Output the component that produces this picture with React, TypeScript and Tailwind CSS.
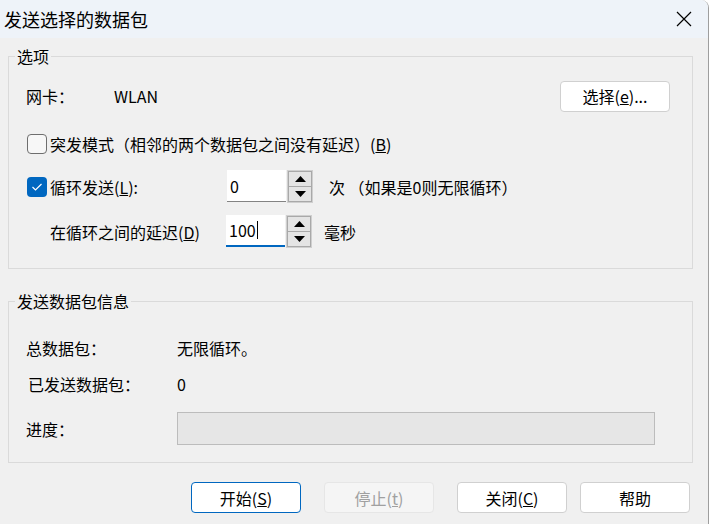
import type { ReactNode } from "react";

function Checkbox({ checked }: { checked?: boolean }) {
  if (checked) {
    return (
      <span className="flex h-[20px] w-[20px] shrink-0 items-center justify-center rounded-[4px] bg-[#0067c0]">
        <svg width="12" height="10" viewBox="0 0 12 10" aria-hidden>
          <polyline
            points="1.5,5 4.5,8 10.5,2"
            fill="none"
            stroke="#fff"
            strokeWidth="1.2"
          />
        </svg>
      </span>
    );
  }
  return (
    <span className="h-[20px] w-[20px] shrink-0 rounded-[4px] border border-[#6e6e6e] bg-[#f7f7f7]" />
  );
}

function Spin({ value, focused }: { value: string; focused?: boolean }) {
  return (
    <div className="flex items-stretch">
      <div
        className={
          focused
            ? "flex h-[32px] w-[59px] items-center border-b-2 border-[#0067c0] bg-white pl-[3px]"
            : "flex h-[32px] w-[59px] items-center border-b border-[#838383] bg-white pl-[3px]"
        }
      >
        <span className="leading-[20px]">{value}</span>
        {focused ? <span className="ml-[1px] h-[18px] w-px bg-black" /> : null}
      </div>
      <div className="ml-px flex h-[33px] w-[26px] flex-col border border-[#cfcfcf]">
        <div className="flex flex-1 items-center justify-center border border-[#a9a9a9] bg-[#e4e4e4]">
          <svg width="11" height="6" viewBox="0 0 11 6" aria-hidden>
            <polygon points="5.5,0 11,6 0,6" fill="#000" />
          </svg>
        </div>
        <div className="flex flex-1 items-center justify-center border border-t-0 border-[#a9a9a9] bg-[#e4e4e4]">
          <svg width="11" height="6" viewBox="0 0 11 6" aria-hidden>
            <polygon points="0,0 11,0 5.5,6" fill="#000" />
          </svg>
        </div>
      </div>
    </div>
  );
}

function Btn({
  children,
  primary,
  disabled,
  className = "",
}: {
  children: ReactNode;
  primary?: boolean;
  disabled?: boolean;
  className?: string;
}) {
  const tone = disabled
    ? "border-[#e6e6e6] bg-[#f5f5f5] text-[#a0a0a0]"
    : primary
      ? "border-[#0067c0] bg-white text-black"
      : "border-[#d0d0d0] bg-white text-black";
  return (
    <button
      type="button"
      className={`flex h-[31px] w-[110px] items-center justify-center rounded-[4px] border text-[16px] leading-[20px] ${tone} ${className}`}
    >
      {children}
    </button>
  );
}

export default function App() {
  return (
    <div className="h-[524px] w-[714px] overflow-hidden bg-white font-['Noto_Sans_CJK_SC',sans-serif] text-[16px] leading-[20px] text-black">
      <div className="flex h-full w-[709px] flex-col overflow-hidden rounded-tr-[8px] border-r border-[#9e9e9e]">
        <div className="flex h-[38px] shrink-0 items-center justify-between bg-[#eef3f9] pl-[4px] pr-[16px]">
          <span className="text-[18px] leading-[24px]">发送选择的数据包</span>
          <svg width="16" height="16" viewBox="0 0 16 16" aria-hidden>
            <path d="M1 1L15 15M15 1L1 15" stroke="#000" strokeWidth="1.2" />
          </svg>
        </div>

        <div className="flex-1 bg-[#f0f0f0]">
          <fieldset className="ml-[8px] mt-[8px] w-[685px] border border-[#dadada]">
            <legend className="ml-[6px] px-[2px] leading-[20px]">选项</legend>
            <div className="flex flex-col pb-[20px] pl-[17px] pr-[22px] pt-[15px]">
              <div className="flex h-[30px] items-center">
                <span className="w-[88px]">网卡：</span>
                <span>WLAN</span>
                <Btn className="ml-auto">
                  选择(<u>e</u>)...
                </Btn>
              </div>

              <div className="mt-[23px] flex h-[20px] items-center pl-px">
                <Checkbox />
                <span className="ml-[3px]">
                  突发模式（相邻的两个数据包之间没有延迟）(<u>B</u>)
                </span>
              </div>

              <div className="mt-[16px] flex h-[33px] items-center">
                <div className="flex w-[201px] items-center pl-px">
                  <Checkbox checked />
                  <span className="ml-[3px]">
                    循环发送(<u>L</u>):
                  </span>
                </div>
                <Spin value="0" />
                <span className="ml-[16px]">次 （如果是0则无限循环）</span>
              </div>

              <div className="mt-[12px] flex h-[33px] items-center">
                <div className="w-[200px] pl-[24px]">
                  在循环之间的延迟(<u>D</u>)
                </div>
                <Spin value="100" focused />
                <span className="ml-[12px]">毫秒</span>
              </div>
            </div>
          </fieldset>

          <fieldset className="ml-[8px] mt-[22px] w-[685px] border border-[#dadada]">
            <legend className="ml-[6px] px-[2px] leading-[20px]">发送数据包信息</legend>
            <div className="flex flex-col pb-[17px] pl-[17px] pt-[25px]">
              <div className="flex h-[24px] items-center">
                <span className="w-[151px]">总数据包：</span>
                <span>无限循环。</span>
              </div>
              <div className="mt-[12px] flex h-[24px] items-center">
                <span className="w-[151px] pl-[2px]">已发送数据包：</span>
                <span>0</span>
              </div>
              <div className="mt-[16px] flex h-[33px] items-center">
                <span className="w-[151px]">进度：</span>
                <div className="h-[33px] w-[478px] border border-[#bcbcbc] bg-[#e6e6e6]" />
              </div>
            </div>
          </fieldset>

          <div className="mt-[19px] flex pl-[191px]">
            <Btn primary>
              开始(<u>S</u>)
            </Btn>
            <Btn disabled className="ml-[23px]">
              停止(<u>t</u>)
            </Btn>
            <Btn className="ml-[23px]">
              关闭(<u>C</u>)
            </Btn>
            <Btn className="ml-[13px]">帮助</Btn>
          </div>
        </div>
      </div>
    </div>
  );
}
